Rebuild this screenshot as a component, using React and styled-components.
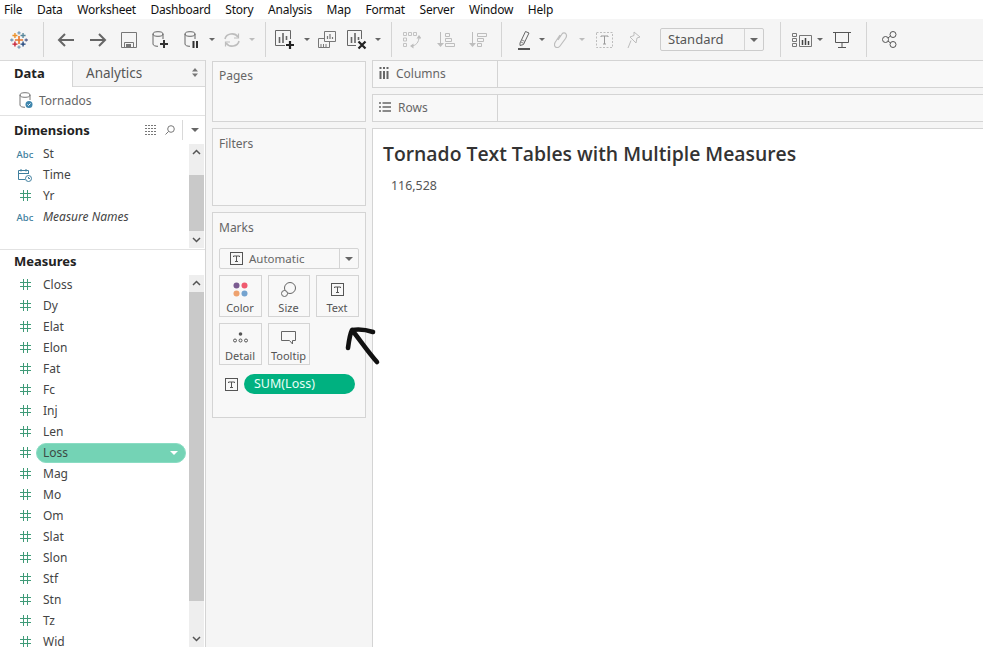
import React from 'react'
import styled, { createGlobalStyle } from 'styled-components'

const Global = createGlobalStyle`
  html, body { margin: 0; padding: 0; height: 100%; background: #f5f5f5; overflow: hidden; }
  body { font-family: "Noto Sans", "Open Sans", sans-serif; font-size: 12px; color: #555; }
`

const Page = styled.div`
  width: 983px;
  height: 647px;
  display: flex;
  flex-direction: column;
  position: relative;
  overflow: hidden;
`
const MenuBar = styled.div`
  height: 19px;
  background: #fff;
  display: flex;
  align-items: center;
  padding-left: 4px;
  gap: 14.5px;
  color: #111;
  font-size: 12px;
  letter-spacing: -0.2px;
`
const Toolbar = styled.div`
  height: 41px;
  background: #f5f5f5;
  display: flex;
  align-items: center;
`
const Tool = styled.div`
  width: ${p => p.$w}px;
  flex: none;
  display: flex;
  align-items: center;
  justify-content: center;
`
const Sep = styled.div`
  width: 1px;
  height: 35px;
  flex: none;
  background: #d4d4d4;
  margin: 0 ${p => p.$r}px 0 ${p => p.$l}px;
`
const Caret = styled.div`
  width: 0;
  height: 0;
  border-left: ${p => p.$s || 3}px solid transparent;
  border-right: ${p => p.$s || 3}px solid transparent;
  border-top: ${p => p.$s || 3}px solid ${p => p.$c || '#666'};
`
const Select = styled.div`
  width: 104px;
  height: 23px;
  box-sizing: border-box;
  margin-left: 12px;
  flex: none;
  display: flex;
  align-items: center;
  justify-content: space-between;
  border: 1px solid #ccc;
  border-radius: 2px;
  padding-left: 7px;
  font-size: 13px;
  color: #555;
  background: #f5f5f5;
`
const SelectText = styled.span`
  margin-top: -2px;
`
const SelectBtn = styled.div`
  width: 18px;
  height: 100%;
  border-left: 1px solid #d4d4d4;
  display: flex;
  align-items: center;
  justify-content: center;
`
const Main = styled.div`
  flex: 1;
  min-height: 0;
  display: grid;
  grid-template-columns: 206px 154px 1fr;
  column-gap: 6px;
`
const Sidebar = styled.div`
  background: #fff;
  border-right: 1px solid #d4d4d4;
  display: flex;
  flex-direction: column;
  min-height: 0;
`
const Tabs = styled.div`
  height: 27px;
  flex: none;
  display: flex;
  border-top: 1px solid #d9d9d9;
  box-sizing: border-box;
`
const DataTab = styled.div`
  width: 73px;
  box-sizing: border-box;
  padding-left: 14px;
  line-height: 24px;
  font-weight: 700;
  font-size: 13px;
  color: #222;
  border-right: 1px solid #d4d4d4;
`
const AnalyticsTab = styled.div`
  flex: 1;
  display: flex;
  align-items: center;
  justify-content: space-between;
  padding: 0 7px 2px 13px;
  font-size: 13.5px;
  color: #555;
  background: #f5f5f5;
  border-bottom: 1px solid #d9d9d9;
`
const SourceRow = styled.div`
  height: 29px;
  flex: none;
  box-sizing: border-box;
  display: flex;
  align-items: center;
  gap: 6px;
  padding: 0 0 2px 19px;
  border-bottom: 1px solid #e2e2e2;
  color: #666;
`
const PaneHead = styled.div`
  height: ${p => p.$h}px;
  flex: none;
  box-sizing: border-box;
  display: flex;
  align-items: center;
  justify-content: space-between;
  padding: 0 6px ${p => p.$lift || 0}px 14px;
  font-weight: 700;
  font-size: 13px;
  color: #222;
`
const HeadTools = styled.div`
  display: flex;
  align-items: center;
  gap: 8px;
`
const HeadSep = styled.div`
  width: 1px;
  height: 20px;
  background: #d9d9d9;
  margin-left: -1px;
`
const Pane = styled.div`
  display: flex;
  height: ${p => p.$h}px;
  flex: none;
  padding-right: 1px;
  overflow: hidden;
`
const FieldList = styled.div`
  flex: 1;
  min-width: 0;
  margin-top: -1px;
`
const Field = styled.div`
  height: 21px;
  display: flex;
  align-items: center;
  position: relative;
  color: #444;
  font-style: ${p => (p.$italic ? 'italic' : 'normal')};
`
const FieldIcon = styled.div`
  width: 36px;
  padding-left: 14px;
  box-sizing: border-box;
  display: flex;
  justify-content: center;
  flex: none;
`
const FieldName = styled.div`
  padding-left: 7px;
  line-height: 12px;
`
const SelectedName = styled.div`
  width: 150px;
  height: 20px;
  box-sizing: border-box;
  display: flex;
  align-items: center;
  justify-content: space-between;
  padding: 0 7px 0 6px;
  border-radius: 10px;
  background: #74d3b5;
  border: 1px solid #8adcc3;
  color: #3c4a45;
`
const Scrollbar = styled.div`
  width: 15px;
  flex: none;
  background: #eeeeee;
  display: flex;
  flex-direction: column;
`
const ScrollEnd = styled.div`
  height: ${p => p.$h}px;
  flex: none;
  display: flex;
  justify-content: center;
  align-items: ${p => (p.$down ? 'flex-end' : 'flex-start')};
  padding: 5px 0;
  box-sizing: border-box;
`
const Thumb = styled.div`
  flex: 1;
  background: #c9c9c9;
`
const Divider = styled.div`
  height: 1px;
  flex: none;
  margin-top: 1px;
  background: #e2e2e2;
`
const ShelfColumn = styled.div`
  display: flex;
  flex-direction: column;
  gap: 6px;
  padding-top: 1px;
`
const Card = styled.div`
  height: ${p => p.$h}px;
  box-sizing: border-box;
  background: #f8f8f8;
  border: 1px solid #d4d4d4;
  padding: ${p => p.$top}px 6px 6px;
`
const CardTitle = styled.div`
  color: #666;
  line-height: 16px;
`
const MarkType = styled.div`
  height: 21px;
  margin-top: 12px;
  box-sizing: border-box;
  border: 1px solid #d4d4d4;
  border-radius: 2px;
  display: flex;
  align-items: center;
  justify-content: space-between;
  padding-left: 10px;
  color: #666;
  font-size: 11.5px;
`
const MarkTypeLabel = styled.div`
  display: flex;
  align-items: center;
  gap: 6px;
`
const MarkGrid = styled.div`
  display: grid;
  grid-template-columns: 43px 42px 43px;
  grid-auto-rows: 42px;
  column-gap: 6px;
  row-gap: 6px;
  margin-top: 6px;
`
const MarkBtn = styled.div`
  box-sizing: border-box;
  border: 1px solid #d4d4d4;
  display: flex;
  flex-direction: column;
  align-items: center;
  justify-content: flex-end;
  padding: 0 1px 1px 0;
  color: #555;
  font-size: 11px;
  line-height: 15px;
`
const MarkGlyph = styled.div`
  height: 21px;
  display: flex;
  align-items: center;
`
const PillRow = styled.div`
  display: flex;
  align-items: center;
  margin-top: 9px;
  padding-left: 6px;
  gap: 6px;
`
const Pill = styled.div`
  width: 111px;
  height: 20px;
  line-height: 19px;
  box-sizing: border-box;
  padding-left: 10px;
  border-radius: 10px;
  background: #00b180;
  color: #e8fff7;
  font-size: 12.5px;
`
const Workspace = styled.div`
  display: flex;
  flex-direction: column;
  gap: 6px;
  min-width: 0;
`
const Shelf = styled.div`
  height: 28px;
  flex: none;
  box-sizing: border-box;
  display: flex;
  background: #f8f8f8;
  border: 1px solid #d4d4d4;
  border-right: none;
`
const ShelfLabel = styled.div`
  width: 125px;
  box-sizing: border-box;
  display: flex;
  align-items: center;
  gap: 7px;
  padding: 0 0 2px 6px;
  color: #666;
  border-right: 1px solid #d4d4d4;
`
const Viz = styled.div`
  flex: 1;
  background: #fff;
  border: 1px solid #d4d4d4;
  border-right: none;
  border-bottom: none;
  padding: 12px 0 0 10px;
`
const Title = styled.div`
  font-family: "Open Sans", "Noto Sans", sans-serif;
  font-size: 19.35px;
  font-weight: 600;
  line-height: 26px;
  color: #333;
`
const Value = styled.div`
  margin: 11px 0 0 8px;
  font-size: 12.4px;
  color: #555;
  line-height: 16px;
`
const ScribbleArrow = styled.svg`
  position: absolute;
  left: 340px;
  top: 320px;
`

const L = '#bdbdbd'

const Svg = ({ w = 20, h = 20, children, ...rest }) => (
  <svg width={w} height={h} viewBox={`0 0 ${w} ${h}`} fill="none" {...rest}>{children}</svg>
)

const Cross = ({ x, y, r, c, t = 1.4 }) => (
  <path d={`M${x - r} ${y}h${r * 2}M${x} ${y - r}v${r * 2}`} stroke={c} strokeWidth={t} />
)
const Logo = () => (
  <Svg w={20} h={20} width={18} height={18}>
    <Cross x={10} y={10} r={4.5} c="#e8762c" t={1.8} />
    <Cross x={5.5} y={5} r={2.8} c="#eb9129" t={1.5} />
    <Cross x={14.5} y={5} r={2.8} c="#59879b" t={1.5} />
    <Cross x={5.5} y={14.5} r={2.8} c="#c72035" t={1.5} />
    <Cross x={14.5} y={14.5} r={2.8} c="#1f447b" t={1.5} />
    <Cross x={10} y={2} r={1.8} c="#7599b5" />
    <Cross x={2} y={10} r={1.8} c="#7599b5" />
    <Cross x={18} y={10} r={1.8} c="#5b6591" />
    <Cross x={10} y={18} r={1.8} c="#7599b5" />
  </Svg>
)
const ArrowIcon = ({ dir }) => (
  <Svg w={18} h={16}>
    <path d={dir === 'left' ? 'M17 8H2M8 2L2 8l6 6' : 'M1 8h15M10 2l6 6-6 6'} stroke="#666" strokeWidth="2" />
  </Svg>
)
const SaveIcon = () => (
  <Svg w={16} h={16}>
    <path d="M.5.5h15v15H.5z" stroke="#777" />
    <path d="M3.5 15.5v-5h9v5" stroke="#777" />
    <path d="M5 12h5v3H5z" fill="#777" />
  </Svg>
)
const Cyl = ({ c = '#666' }) => (
  <>
    <ellipse cx="6" cy="3" rx="5" ry="2.3" stroke={c} />
    <path d="M1 3v10c0 1.4 2 2.3 5 2.3M11 3v5" stroke={c} />
  </>
)
const NewSourceIcon = () => (
  <Svg w={18} h={18}>
    <Cyl />
    <path d="M12 9v8M8 13h8" stroke="#333" strokeWidth="2" />
  </Svg>
)
const PauseIcon = () => (
  <Svg w={16} h={18}>
    <Cyl />
    <path d="M9.5 10v7M13 10v7" stroke="#333" strokeWidth="2" />
  </Svg>
)
const RefreshIcon = () => (
  <Svg w={18} h={16}>
    <path d="M2 7a7 6 0 0 1 13-2M16 9a7 6 0 0 1-13 2" stroke={L} strokeWidth="1.6" />
    <path d="M15.5 1.5V6h-4.5M2.5 14.5V10H7" stroke={L} strokeWidth="1.2" />
  </Svg>
)
const NewSheetIcon = () => (
  <Svg w={21} h={20}>
    <path d="M10 15.500H.5V.5h15V9" stroke="#666" />
    <path d="M4.500 7v6M8 3v10M11.500 6v4" stroke="#666" strokeWidth="1.600" />
    <path d="M15 11v8M11 15h8" stroke="#222" strokeWidth="2.200" />
  </Svg>
)
const DupIcon = () => (
  <Svg w={18} h={17}>
    <path d="M.5 7.500h11v9H.5z" stroke="#777" />
    <path d="M3 16v-3M5.500 16v-3M8 16v-3" stroke="#777" />
    <path d="M6.500.5h11v10h-11z" stroke="#777" fill="#f5f5f5" />
    <path d="M9.500 8V5M12 8V3M14.500 8V6" stroke="#777" strokeWidth="1.200" />
  </Svg>
)
const ClearIcon = () => (
  <Svg w={21} h={20}>
    <path d="M9 15.500H.5V.5h14V9" stroke="#666" />
    <path d="M4.500 7v6M8 3v10M11.500 7v3" stroke="#666" strokeWidth="1.600" />
    <path d="M11.500 11.500l7 7M18.500 11.500l-7 7" stroke="#222" strokeWidth="2.200" />
  </Svg>
)
const SwapIcon = () => (
  <Svg w={18} h={18}>
    <path d="M.5 1.500h3v3h-3zM5.500 1.500h3v3h-3zM10.500 1.500h3v3h-3zM.5 7h3v3h-3zM.5 12.500h3v3h-3z" stroke={L} strokeWidth=".9" />
    <path d="M16 6c0 5-3 9-8 9" stroke={L} />
    <path d="M16 4l2.500 3.500h-5zM7 15l3.500-2.500v5z" fill={L} />
  </Svg>
)
const SortIcon = ({ desc }) => (
  <Svg w={18} h={16}>
    <path d="M3.500 0v12" stroke={L} />
    <path d="M0 11h7l-3.500 4z" fill={L} />
    {desc ? (
      <path d="M8.500 1.500h9v3h-9zM8.500 6.500h6v3h-6zM8.500 11.500h4v3h-4z" stroke={L} />
    ) : (
      <path d="M8.500 1.500h4v3h-4zM8.500 6.500h6v3h-6zM8.500 11.500h9v3h-9z" stroke={L} />
    )}
  </Svg>
)
const HighlightIcon = () => (
  <Svg w={14} h={20}>
    <path d="M3 13L8.500 1.500l3.500 1.500-5.500 11.500-3.500 1z" stroke="#666" />
    <path d="M4 12l3 1.500M5 10l3 1.500" stroke="#888" />
    <path d="M1 19h12" stroke="#555" strokeWidth="2" />
  </Svg>
)
const ClipIcon = () => (
  <Svg w={14} h={16}>
    <path d="M4 8l4-6c1-1.500 3-1.500 4 0s.5 3-.5 4.500L6 14c-1.500 2-4 2-5 .5S.5 11 2 9l4-6" stroke={L} strokeWidth="1.200" />
  </Svg>
)
const DashedT = () => (
  <Svg w={17} h={16}>
    <path d="M.5.5h16v15H.5z" stroke={L} strokeDasharray="2 1.500" />
    <path d="M5 5V4h7v1M8.500 4v8M7 12h3" stroke="#999" />
  </Svg>
)
const PinIcon = () => (
  <Svg w={14} h={18}>
    <path d="M7 1l6 5-3 1-1 5-6-6 4-1.500zM4 9.500L1 17" stroke={L} />
  </Svg>
)
const ShowMeIcon = () => (
  <Svg w={20} h={16}>
    <path d="M.5 1.500h4v3h-4zM.5 6.500h4v3h-4zM.5 11.500h4v3h-4z" stroke="#777" />
    <path d="M7.500 3.500h12v11h-12z" stroke="#777" />
    <path d="M10.500 13V8M13.500 13V6M16.500 13V9" stroke="#444" strokeWidth="1.500" />
  </Svg>
)
const PresentIcon = () => (
  <Svg w={18} h={18}>
    <path d="M0 1.500h18M2.500 1.500v10h13v-10M9 11.500v5M5 16.500h8" stroke="#555" />
  </Svg>
)
const ShareIcon = () => (
  <Svg w={15} h={17}>
    <circle cx="3.500" cy="8.500" r="3" stroke="#555" />
    <circle cx="11" cy="3.500" r="3" stroke="#555" />
    <circle cx="11" cy="13.500" r="3" stroke="#555" />
    <path d="M6 7l2.500-2M6 10l2.500 2" stroke="#555" />
  </Svg>
)
const SourceIcon = () => (
  <Svg w={14} h={17}>
    <Cyl c="#777" />
    <circle cx="10" cy="12.500" r="3.500" fill="#3f86ad" />
    <path d="M8.500 12.500l1 1 2-2" stroke="#fff" />
  </Svg>
)
const UpDownIcon = () => (
  <Svg w={6} h={9}>
    <path d="M3 0l3 3.500H0zM3 9L0 5.500h6z" fill="#777" />
  </Svg>
)
const Chevron = ({ down }) => (
  <Svg w={9} h={6}>
    <path d={down ? 'M1 1l3.500 3.500L8 1' : 'M1 5l3.500-3.500L8 5'} stroke="#555" strokeWidth="1.500" />
  </Svg>
)
const HashIcon = () => (
  <Svg w={11} h={11}>
    <path d="M3.500 0v11M7.500 0v11M0 3.500h11M0 7.500h11" stroke="#3f9b78" />
  </Svg>
)
const AbcIcon = styled.span`
  font-size: 9.5px;
  font-weight: 500;
  font-style: normal;
  margin-top: 1px;
  color: #3f7f9e;
`
const DateIcon = () => (
  <Svg w={14} h={14}>
    <path d="M7 11.500H.5v-9h10V6M.5 5.500h10M3 1v2.500M8 1v2.500" stroke="#3f7f9e" />
    <circle cx="10.500" cy="10.500" r="3" stroke="#3f7f9e" fill="#fff" />
    <path d="M10.500 9v1.500h1.500" stroke="#3f7f9e" />
  </Svg>
)
const ListViewIcon = () => (
  <Svg w={12} h={10}>
    <path d="M0 .5h12M0 3.500h12M0 6.500h12M0 9.500h12" stroke="#777" strokeDasharray="2 1" />
  </Svg>
)
const SearchIcon = () => (
  <Svg w={10} h={10}>
    <circle cx="6" cy="4" r="3.300" stroke="#777" />
    <path d="M3.500 6.500L.5 9.500" stroke="#777" />
  </Svg>
)
const ColumnsIcon = () => (
  <Svg w={10} h={12}>
    <path d="M1.500 4v8M5 4v8M8.500 4v8M1.500 0v2M5 0v2M8.500 0v2" stroke="#666" strokeWidth="2" />
  </Svg>
)
const RowsIcon = () => (
  <Svg w={12} h={10}>
    <path d="M0 1h2M0 5h2M0 9h2M3.500 1H12M3.500 5H12M3.500 9H12" stroke="#666" strokeWidth="1.500" />
  </Svg>
)
const TBox = ({ s = 13, c = '#555' }) => (
  <Svg w={s} h={s}>
    <rect x=".5" y=".5" width={s - 1} height={s - 1} stroke={c} />
    <path d={`M${s / 2 - 3} 5V4h6v1M${s / 2} 4v5.500M${s / 2 - 1.500} 9.500h3`} stroke={c} />
  </Svg>
)
const ColorIcon = () => (
  <Svg w={15} h={15}>
    <circle cx="3.500" cy="3.500" r="3" fill="#7b5c91" />
    <circle cx="11.500" cy="3.500" r="3" fill="#ef5a6f" />
    <circle cx="3.500" cy="11.500" r="3" fill="#eea26f" />
    <circle cx="11.500" cy="11.500" r="3" fill="#74a3cf" />
  </Svg>
)
const SizeIcon = () => (
  <Svg w={15} h={15}>
    <circle cx="9" cy="6" r="5.500" stroke="#666" />
    <circle cx="3.500" cy="11.500" r="3" stroke="#666" fill="#f8f8f8" />
  </Svg>
)
const DetailIcon = () => (
  <Svg w={15} h={11}>
    <circle cx="7.500" cy="2" r="1.800" fill="#555" />
    <circle cx="2" cy="8.500" r="1.500" stroke="#555" />
    <circle cx="7.500" cy="8.500" r="1.500" stroke="#555" />
    <circle cx="13" cy="8.500" r="1.500" stroke="#555" />
  </Svg>
)
const TooltipIcon = () => (
  <Svg w={15} h={14}>
    <path d="M.5.5h14v9h-3v3.500l-3-3.500H.5z" stroke="#666" />
  </Svg>
)

const menu = ['File', 'Data', 'Worksheet', 'Dashboard', 'Story', 'Analysis', 'Map', 'Format', 'Server', 'Window', 'Help']
const dimensions = [
  { name: 'St', icon: <AbcIcon>Abc</AbcIcon> },
  { name: 'Time', icon: <DateIcon /> },
  { name: 'Yr', icon: <HashIcon /> },
  { name: 'Measure Names', icon: <AbcIcon>Abc</AbcIcon>, italic: true },
]
const measures = ['Closs', 'Dy', 'Elat', 'Elon', 'Fat', 'Fc', 'Inj', 'Len', 'Loss', 'Mag', 'Mo', 'Om', 'Slat', 'Slon', 'Stf', 'Stn', 'Tz', 'Wid']

const marks = [
  { label: 'Color', icon: <ColorIcon /> },
  { label: 'Size', icon: <SizeIcon /> },
  { label: 'Text', icon: <TBox /> },
  { label: 'Detail', icon: <DetailIcon /> },
  { label: 'Tooltip', icon: <TooltipIcon /> },
]

export default function App() {
  return (
    <Page>
      <Global />
      <MenuBar>
        {menu.map(m => <span key={m}>{m}</span>)}
      </MenuBar>
      <Toolbar>
        <Tool $w={38}><Logo /></Tool>
        <Sep $l={5} $r={5} />
        <Tool $w={34}><ArrowIcon dir="left" /></Tool>
        <Tool $w={30}><ArrowIcon dir="right" /></Tool>
        <Tool $w={32}><SaveIcon /></Tool>
        <Tool $w={32}><NewSourceIcon /></Tool>
        <Tool $w={30}><PauseIcon /></Tool>
        <Tool $w={10}><Caret /></Tool>
        <Tool $w={30}><RefreshIcon /></Tool>
        <Tool $w={10}><Caret $c={L} /></Tool>
        <Sep $l={8} $r={3} />
        <Tool $w={32}><NewSheetIcon /></Tool>
        <Tool $w={12}><Caret /></Tool>
        <Tool $w={28}><DupIcon /></Tool>
        <Tool $w={32}><ClearIcon /></Tool>
        <Tool $w={10}><Caret /></Tool>
        <Sep $l={8} $r={5} />
        <Tool $w={30}><SwapIcon /></Tool>
        <Tool $w={38}><SortIcon /></Tool>
        <Tool $w={26}><SortIcon desc /></Tool>
        <Sep $l={10} $r={8} />
        <Tool $w={28}><HighlightIcon /></Tool>
        <Tool $w={8}><Caret /></Tool>
        <Tool $w={30}><ClipIcon /></Tool>
        <Tool $w={12}><Caret $c={L} /></Tool>
        <Tool $w={32}><DashedT /></Tool>
        <Tool $w={28}><PinIcon /></Tool>
        <Select>
          <SelectText>Standard</SelectText>
          <SelectBtn><Caret $s={4} /></SelectBtn>
        </Select>
        <Sep $l={16} $r={7} />
        <Tool $w={28}><ShowMeIcon /></Tool>
        <Tool $w={8}><Caret /></Tool>
        <Tool $w={36}><PresentIcon /></Tool>
        <Sep $l={6} $r={7} />
        <Tool $w={30}><ShareIcon /></Tool>
      </Toolbar>
      <Main>
        <Sidebar>
          <Tabs>
            <DataTab>Data</DataTab>
            <AnalyticsTab>Analytics<UpDownIcon /></AnalyticsTab>
          </Tabs>
          <SourceRow><SourceIcon />Tornados</SourceRow>
          <PaneHead $h={28}>
            Dimensions
            <HeadTools>
              <ListViewIcon />
              <SearchIcon />
              <HeadSep />
              <Caret $s={4} />
            </HeadTools>
          </PaneHead>
          <Pane $h={104}>
            <FieldList>
              {dimensions.map(d => (
                <Field key={d.name} $italic={d.italic}>
                  <FieldIcon>{d.icon}</FieldIcon>
                  <FieldName>{d.name}</FieldName>
                </Field>
              ))}
            </FieldList>
            <Scrollbar>
              <ScrollEnd $h={31}><Chevron /></ScrollEnd>
              <Thumb />
              <ScrollEnd $h={17} $down><Chevron down /></ScrollEnd>
            </Scrollbar>
          </Pane>
          <Divider />
          <PaneHead $h={25} $lift={4}>Measures</PaneHead>
          <Pane $h={372}>
            <FieldList>
              {measures.map(m => (
                <Field key={m}>
                  <FieldIcon><HashIcon /></FieldIcon>
                  {m === 'Loss' ? (
                    <SelectedName>{m}<Caret $s={4} $c="#fff" /></SelectedName>
                  ) : (
                    <FieldName>{m}</FieldName>
                  )}
                </Field>
              ))}
            </FieldList>
            <Scrollbar>
              <ScrollEnd $h={17}><Chevron /></ScrollEnd>
              <Thumb />
              <ScrollEnd $h={46} $down><Chevron down /></ScrollEnd>
            </Scrollbar>
          </Pane>
        </Sidebar>
        <ShelfColumn>
          <Card $h={61} $top={6}><CardTitle>Pages</CardTitle></Card>
          <Card $h={78} $top={7}><CardTitle>Filters</CardTitle></Card>
          <Card $h={206} $top={7}>
            <CardTitle>Marks</CardTitle>
            <MarkType>
              <MarkTypeLabel><TBox />Automatic</MarkTypeLabel>
              <SelectBtn><Caret $s={4} /></SelectBtn>
            </MarkType>
            <MarkGrid>
              {marks.map(m => (
                <MarkBtn key={m.label}>
                  <MarkGlyph>{m.icon}</MarkGlyph>
                  {m.label}
                </MarkBtn>
              ))}
            </MarkGrid>
            <PillRow>
              <TBox />
              <Pill>SUM(Loss)</Pill>
            </PillRow>
          </Card>
        </ShelfColumn>
        <Workspace>
          <Shelf><ShelfLabel><ColumnsIcon />Columns</ShelfLabel></Shelf>
          <Shelf><ShelfLabel><RowsIcon />Rows</ShelfLabel></Shelf>
          <Viz>
            <Title>Tornado Text Tables with Multiple Measures</Title>
            <Value>116,528</Value>
          </Viz>
        </Workspace>
      </Main>
      <ScribbleArrow width="45" height="48" viewBox="0 0 45 48" fill="none">
        <path d="M8 28C9 20 10 14 12 10C18 9 27 10 33 12M12 10C20 20 28 32 37 42" stroke="#111" strokeWidth="4.600" strokeLinecap="round" strokeLinejoin="round" />
      </ScribbleArrow>
    </Page>
  )
}
